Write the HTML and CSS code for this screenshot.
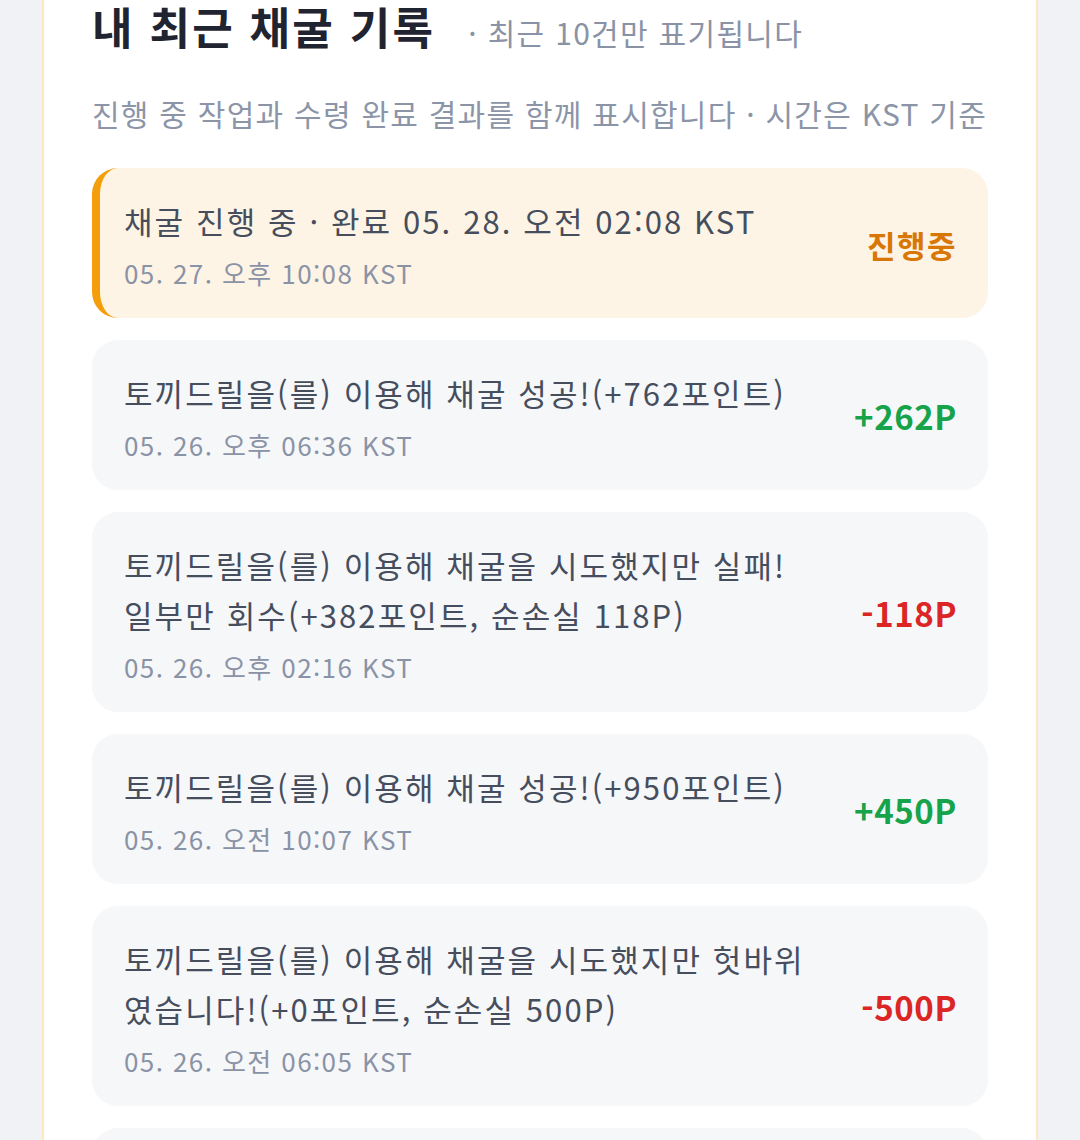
FILE: index.html
```html
<!DOCTYPE html>
<html lang="ko">
<head>
<meta charset="utf-8">
<link rel="stylesheet" href="styles.css">
</head>
<body>
<div class="panel">
  <div class="head">
    <h2 class="title">내 최근 채굴 기록</h2>
    <span class="sub">· 최근 10건만 표기됩니다</span>
  </div>
  <p class="desc">진행 중 작업과 수령 완료 결과를 함께 표시합니다 · 시간은 KST 기준</p>
  <div class="list">
    <div class="item pending">
      <div class="body">
        <div class="msg">채굴 진행 중 · 완료 05. 28. 오전 02:08 KST</div>
        <div class="date">05. 27. 오후 10:08 KST</div>
      </div>
      <div class="amt orange">진행중</div>
    </div>
    <div class="item">
      <div class="body">
        <div class="msg">토끼드릴을(를) 이용해 채굴 성공!(+762포인트)</div>
        <div class="date">05. 26. 오후 06:36 KST</div>
      </div>
      <div class="amt green">+262P</div>
    </div>
    <div class="item">
      <div class="body">
        <div class="msg">토끼드릴을(를) 이용해 채굴을 시도했지만 실패!<br>일부만 회수(+382포인트, 순손실 118P)</div>
        <div class="date">05. 26. 오후 02:16 KST</div>
      </div>
      <div class="amt red">-118P</div>
    </div>
    <div class="item">
      <div class="body">
        <div class="msg">토끼드릴을(를) 이용해 채굴 성공!(+950포인트)</div>
        <div class="date">05. 26. 오전 10:07 KST</div>
      </div>
      <div class="amt green">+450P</div>
    </div>
    <div class="item">
      <div class="body">
        <div class="msg">토끼드릴을(를) 이용해 채굴을 시도했지만 헛바위<br>였습니다!(+0포인트, 순손실 500P)</div>
        <div class="date">05. 26. 오전 06:05 KST</div>
      </div>
      <div class="amt red">-500P</div>
    </div>
    <div class="item">
      <div class="body">
        <div class="msg">토끼드릴을(를) 이용해 채굴 성공!(+640포인트)</div>
        <div class="date">05. 26. 오전 02:04 KST</div>
      </div>
      <div class="amt green">+140P</div>
    </div>
  </div>
</div>
</body>
</html>
```
FILE: styles.css
```css
html, body {
  margin: 0;
  padding: 0;
}
body {
  background: #f1f2f5;
  font-family: "Noto Sans CJK KR", "Noto Sans", sans-serif;
  height: 1140px;
  overflow: hidden;
}
.panel {
  margin: 0 42px;
  background: #ffffff;
  border-left: 2px solid #fde8c0;
  border-right: 2px solid #fde8c0;
  padding: 0 48px 40px;
  min-height: 1140px;
  box-sizing: border-box;
}
.head {
  display: flex;
  align-items: baseline;
  height: 54px;
}
.title {
  margin: 0;
  font-size: 44px;
  font-weight: 700;
  line-height: 52px;
  letter-spacing: 2.3px;
  color: #1f2430;
}
.sub {
  margin-left: 33px;
  font-size: 30px;
  letter-spacing: 1.3px;
  color: #8a93a6;
}
.desc {
  margin: 37px 0 0;
  font-size: 30px;
  line-height: 44px;
  letter-spacing: 1.25px;
  color: #8c95a8;
  white-space: nowrap;
}
.list {
  margin-top: 33px;
  display: flex;
  flex-direction: column;
  gap: 22px;
}
.item {
  display: flex;
  align-items: center;
  justify-content: space-between;
  background: #f6f7f9;
  border-radius: 26px;
  padding: 28px 31px 26px 32px;
}
.item.pending {
  background: #fef4e5;
  border-left: 8px solid #f59e0b;
  padding-left: 24px;
}
.msg {
  font-size: 31px;
  line-height: 50px;
  letter-spacing: 2.1px;
  color: #464e5e;
}
.date {
  margin-top: 8px;
  font-size: 26px;
  line-height: 38px;
  letter-spacing: 1.4px;
  color: #8a93a6;
}
.amt {
  font-size: 33px;
  font-weight: 700;
  letter-spacing: 0.6px;
  white-space: nowrap;
  margin-left: 20px;
}
.orange { color: #d97706; font-size: 31px; letter-spacing: 1.5px; }
.green { color: #16a34a; }
.red { color: #dc2626; }
```
